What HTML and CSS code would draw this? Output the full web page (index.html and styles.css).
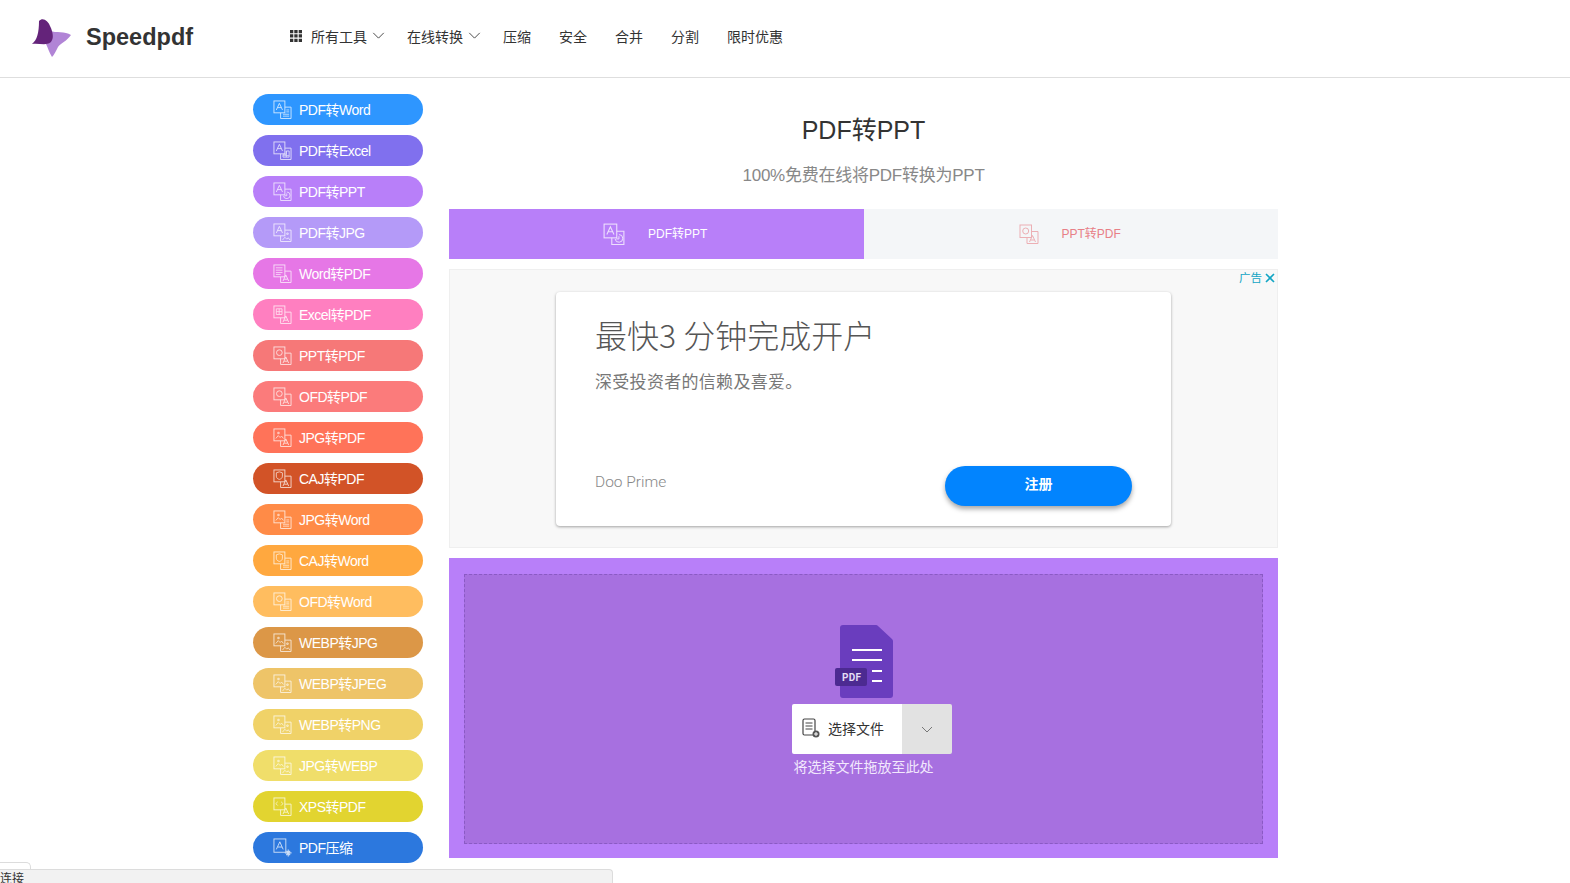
FILE: index.html
```html
<!DOCTYPE html>
<html lang="zh-CN">
<head>
<meta charset="utf-8">
<title>PDF转PPT - Speedpdf</title>
<link rel="stylesheet" href="styles.css">
</head>
<body>
<svg class="defs" width="0" height="0" aria-hidden="true">
  <defs>
    <g id="box" fill="none" stroke="currentColor" stroke-width="1">
      <rect x="1" y="1" width="11.500" height="12.500"/>
      <path d="M12.500 7.500H19V19.500H8V13.500"/>
    </g>
    <path id="sA" d="M3.500 10.500 6.700 3.500l3.300 7M4.800 8h3.900" fill="none" stroke="currentColor"/>
    <path id="sL" d="M3 4h7M3 6.500h7M3 9h7M3 11h5" fill="none" stroke="currentColor" stroke-width=".9"/>
    <path id="sG" d="M3.500 4h6v6h-6zM3.500 7h6M6.500 4v6" fill="none" stroke="currentColor" stroke-width=".9"/>
    <circle id="sC" cx="6.700" cy="7" r="3" fill="none" stroke="currentColor"/>
    <path id="sI" d="M3 11l2.500-3 2 2 1.500-1.500 2 2.500M5 4.500h1.500V6H5z" fill="none" stroke="currentColor" stroke-width=".9"/>
    <path id="sS" d="M3.500 4l3.200-1 3.200 1v3.500c0 2-1.500 3-3.200 3.500-1.700-.5-3.200-1.500-3.200-3.500z" fill="none" stroke="currentColor" stroke-width=".9"/>
    <path id="sX" d="M5 5 3 7l2 2M8.500 5l2 2-2 2" fill="none" stroke="currentColor" stroke-width=".9"/>
    <path id="tA" d="M10.500 18l3-6.500 3 6.500M11.700 16h3.600" fill="none" stroke="currentColor"/>
    <path id="tL" d="M14 10.500h3M14 12.500h3M10.500 15h6.500M10.500 17h6.500" fill="none" stroke="currentColor" stroke-width=".9"/>
    <path id="tG" d="M14 10.500h3v6.500h-6.500v-3H14zM10.500 15.500H17M14 10.500V17" fill="none" stroke="currentColor" stroke-width=".9"/>
    <path id="tC" d="M14.500 10.500a3.500 3.500 0 1 1-3.500 4M14.500 12v2.500H12" fill="none" stroke="currentColor" stroke-width=".9"/>
    <path id="tI" d="M10 18l2.500-3 2 2 1.500-1.500 2 2.500M14.500 10.500H16V12h-1.500z" fill="none" stroke="currentColor" stroke-width=".9"/>
  </defs>
</svg>

<header class="topbar">
  <a class="brand">
    <svg class="logo" viewBox="0 0 40 40" aria-hidden="true">
      <path d="M19 13C25 15 34 13 40 17 36 23 30 25 27 29 25 33 23 37 21 39 18 34 17 30 15 26 20 25 23 19 19 13Z" fill="#b184d6"/>
      <path d="M8 3C12-1 17 3 19 8 22 14 23 20 20 24 16 28 8 25 1 26 6 22 8 15 8 3Z" fill="#64237a"/>
    </svg>
    <span class="brand-name">Speedpdf</span>
  </a>
  <nav class="nav">
    <a class="nav-item nav-tools">
      <svg class="grid-ico" viewBox="0 0 12 12" aria-hidden="true"><path d="M0 0h3.300v3.300H0zM4.300 0h3.300v3.300H4.300zM8.700 0H12v3.300H8.700zM0 4.300h3.300v3.300H0zM4.300 4.300h3.300v3.300H4.300zM8.700 4.300H12v3.300H8.700zM0 8.700h3.300V12H0zM4.300 8.700h3.300V12H4.300zM8.700 8.700H12V12H8.700z" fill="#333"/></svg>
      所有工具
      <svg class="chev" viewBox="0 0 14 8" aria-hidden="true"><path d="M1 1l6 6 6-6" fill="none" stroke="#333" stroke-width="1"/></svg>
    </a>
    <a class="nav-item nav-conv">在线转换
      <svg class="chev" viewBox="0 0 14 8" aria-hidden="true"><path d="M1 1l6 6 6-6" fill="none" stroke="#333" stroke-width="1"/></svg>
    </a>
    <a class="nav-item">压缩</a>
    <a class="nav-item">安全</a>
    <a class="nav-item">合并</a>
    <a class="nav-item">分割</a>
    <a class="nav-item">限时优惠</a>
  </nav>
</header>

<div class="page">
  <aside class="side">
    <a class="pill c1"><svg class="pill-ico" viewBox="0 0 20 20"><use href="#box"/><use href="#sA"/><use href="#tL"/></svg>PDF转Word</a>
    <a class="pill c2"><svg class="pill-ico" viewBox="0 0 20 20"><use href="#box"/><use href="#sA"/><use href="#tG"/></svg>PDF转Excel</a>
    <a class="pill c3"><svg class="pill-ico" viewBox="0 0 20 20"><use href="#box"/><use href="#sA"/><use href="#tC"/></svg>PDF转PPT</a>
    <a class="pill c4"><svg class="pill-ico" viewBox="0 0 20 20"><use href="#box"/><use href="#sA"/><use href="#tI"/></svg>PDF转JPG</a>
    <a class="pill c5"><svg class="pill-ico" viewBox="0 0 20 20"><use href="#box"/><use href="#sL"/><use href="#tA"/></svg>Word转PDF</a>
    <a class="pill c6"><svg class="pill-ico" viewBox="0 0 20 20"><use href="#box"/><use href="#sG"/><use href="#tA"/></svg>Excel转PDF</a>
    <a class="pill c7"><svg class="pill-ico" viewBox="0 0 20 20"><use href="#box"/><use href="#sC"/><use href="#tA"/></svg>PPT转PDF</a>
    <a class="pill c8"><svg class="pill-ico" viewBox="0 0 20 20"><use href="#box"/><use href="#sC"/><use href="#tA"/></svg>OFD转PDF</a>
    <a class="pill c9"><svg class="pill-ico" viewBox="0 0 20 20"><use href="#box"/><use href="#sI"/><use href="#tA"/></svg>JPG转PDF</a>
    <a class="pill c10"><svg class="pill-ico" viewBox="0 0 20 20"><use href="#box"/><use href="#sS"/><use href="#tA"/></svg>CAJ转PDF</a>
    <a class="pill c11"><svg class="pill-ico" viewBox="0 0 20 20"><use href="#box"/><use href="#sI"/><use href="#tL"/></svg>JPG转Word</a>
    <a class="pill c12"><svg class="pill-ico" viewBox="0 0 20 20"><use href="#box"/><use href="#sS"/><use href="#tL"/></svg>CAJ转Word</a>
    <a class="pill c13"><svg class="pill-ico" viewBox="0 0 20 20"><use href="#box"/><use href="#sC"/><use href="#tL"/></svg>OFD转Word</a>
    <a class="pill c14"><svg class="pill-ico" viewBox="0 0 20 20"><use href="#box"/><use href="#sI"/><use href="#tI"/></svg>WEBP转JPG</a>
    <a class="pill c15"><svg class="pill-ico" viewBox="0 0 20 20"><use href="#box"/><use href="#sI"/><use href="#tI"/></svg>WEBP转JPEG</a>
    <a class="pill c16"><svg class="pill-ico" viewBox="0 0 20 20"><use href="#box"/><use href="#sI"/><use href="#tI"/></svg>WEBP转PNG</a>
    <a class="pill c17"><svg class="pill-ico" viewBox="0 0 20 20"><use href="#box"/><use href="#sI"/><use href="#tI"/></svg>JPG转WEBP</a>
    <a class="pill c18"><svg class="pill-ico" viewBox="0 0 20 20"><use href="#box"/><use href="#sX"/><use href="#tA"/></svg>XPS转PDF</a>
    <a class="pill c19"><svg class="pill-ico" viewBox="0 0 20 20"><rect x="1" y="1" width="12.500" height="14" fill="none" stroke="currentColor"/><path d="M3.500 12 7.200 4l3.500 8M5 9.500h4.500" fill="none" stroke="currentColor"/><path d="M16 12v7.500M12.500 15.700h7M14 13.500l4 4.500M18 13.500l-4 4.500" stroke="currentColor" stroke-width="1.200"/></svg>PDF压缩</a>
  </aside>

  <main class="main">
    <h1 class="title">PDF转PPT</h1>
    <p class="subtitle">100%免费在线将PDF转换为PPT</p>

    <div class="tabs">
      <a class="tab tab-on"><svg class="tab-ico" viewBox="0 0 20 20"><use href="#box"/><use href="#sA"/><use href="#tC"/></svg>PDF转PPT</a>
      <a class="tab tab-off"><svg class="tab-ico" viewBox="0 0 20 20"><use href="#box"/><use href="#sC"/><use href="#tA"/></svg>PPT转PDF</a>
    </div>

    <section class="ad">
      <div class="ad-mark">
        <span class="ad-label">广告</span>
        <svg class="ad-x" viewBox="0 0 10 10" aria-hidden="true"><path d="M1 1l8 8M9 1l-8 8" stroke="#12a5c4" stroke-width="1.600"/></svg>
      </div>
      <div class="ad-card">
        <div class="ad-head">最快3 分钟完成开户</div>
        <div class="ad-desc">深受投资者的信赖及喜爱。</div>
        <div class="ad-foot">
          <span class="ad-brand">Doo Prime</span>
          <a class="ad-btn">注册</a>
        </div>
      </div>
    </section>

    <section class="upload">
      <div class="drop">
        <svg class="pdf-ico" viewBox="0 0 58 73" aria-hidden="true">
          <path d="M5 3a3 3 0 0 1 3-3h33a3 3 0 0 1 2 1l14 13a3 3 0 0 1 1 2v54a3 3 0 0 1-3 3H8a3 3 0 0 1-3-3z" fill="#6a3dbe"/>
          <path d="M17 25h30M17 35h30M37 46h10M37 56h10" stroke="#fff" stroke-width="2"/>
          <rect x="0" y="43" width="32" height="18" rx="2" fill="#4c2a91"/>
        </svg>
        <span class="pdf-tag">PDF</span>
        <div class="pick">
          <a class="pick-main">
            <svg class="pick-ico" viewBox="0 0 18 20" aria-hidden="true">
              <rect x="1" y="1" width="12" height="16" rx="1.500" fill="none" stroke="#444" stroke-width="1.200"/>
              <path d="M3.500 5h7M3.500 8h7M3.500 11h7" stroke="#444" stroke-width="1"/>
              <circle cx="14" cy="16" r="3.500" fill="#555"/>
              <path d="M14 14v4M12 16h4" stroke="#fff" stroke-width="1"/>
            </svg>
            选择文件
          </a>
          <a class="pick-more"><svg class="pick-chev" viewBox="0 0 12 7" aria-hidden="true"><path d="M1 1l5 5 5-5" fill="none" stroke="#777" stroke-width="1"/></svg></a>
        </div>
        <div class="hint">将选择文件拖放至此处</div>
      </div>
    </section>
  </main>
</div>

<div class="status">
  <div class="status-tab"></div>
  <div class="status-box">连接</div>
</div>
</body>
</html>
```
FILE: styles.css
```css
* { box-sizing: border-box; }
html, body { margin: 0; height: 883px; overflow: hidden; }
body {
  background: #fff;
  color: #333;
  font-family: "Liberation Sans", "Noto Sans CJK SC", sans-serif;
  position: relative;
}
a { color: inherit; text-decoration: none; }
.defs { position: absolute; }

.topbar {
  height: 78px;
  border-bottom: 1px solid #dedede;
  display: flex;
  align-items: center;
  padding: 0 0 4px 31px;
}
.brand { display: flex; align-items: center; width: 259px; }
.logo { width: 40px; height: 40px; margin-top: 3px; }
.brand-name {
  font-size: 23.5px;
  font-weight: 700;
  color: #333;
  margin-left: 15px;
  margin-top: 1px;
}
.nav { display: flex; align-items: center; font-size: 14px; color: #333; margin-top: -2px; }
.nav-item { display: flex; align-items: center; margin-right: 28px; white-space: nowrap; }
.nav-tools { margin-right: 22px; }
.nav-conv { margin-right: 22px; }
.grid-ico { width: 12px; height: 12px; margin-right: 9px; }
.chev { width: 13px; height: 7px; margin-left: 5px; }

.page { display: flex; padding-left: 253px; }
.side {
  width: 170px;
  padding-top: 16px;
  display: flex;
  flex-direction: column;
  gap: 10px;
  flex: none;
}
.pill {
  height: 31px;
  border-radius: 16px;
  color: #fff;
  font-size: 14px;
  line-height: 29px;
  display: flex;
  align-items: center;
  padding-left: 20px;
  padding-top: 1px;
  white-space: nowrap;
  letter-spacing: -0.5px;
}
.pill-ico { width: 19px; height: 19px; margin-right: 7px; margin-top: -2px; opacity: .75; color: #fff; flex: none; }
.c1 { background: #2e96ff; }
.c2 { background: #8070ee; }
.c3 { background: #b87ff9; }
.c4 { background: #b49af8; }
.c5 { background: #e677e6; }
.c6 { background: #ff7fc0; }
.c7 { background: #f67878; }
.c8 { background: #fb7b7b; }
.c9 { background: #ff7359; }
.c10 { background: #d25327; }
.c11 { background: #ff8b47; }
.c12 { background: #ffa83f; }
.c13 { background: #ffbd5f; }
.c14 { background: #dc9747; }
.c15 { background: #eec468; }
.c16 { background: #f0d268; }
.c17 { background: #f0de6a; }
.c18 { background: #e2d430; }
.c19 { background: #2c78de; }

.main { width: 829px; margin-left: 26px; flex: none; }
.title {
  font-size: 25px;
  font-weight: 400;
  color: #333;
  text-align: center;
  margin: 0;
  padding-top: 38px;
  line-height: 28px;
}
.subtitle {
  font-size: 17px;
  color: #888;
  text-align: center;
  margin: 0;
  padding-top: 20px;
  line-height: 24px;
  height: 65px;
  letter-spacing: -0.25px;
}
.tabs { display: flex; height: 50px; }
.tab {
  flex: 0 0 50%;
  display: flex;
  align-items: center;
  font-size: 12px;
  line-height: 14px;
}
.tab-on { background: #b87ff9; color: #fff; padding-left: 154px; }
.tab-off { background: #f4f6f8; color: #e88087; padding-left: 155px; }
.tab-ico { width: 22px; height: 22px; margin-right: 23px; opacity: .75; }
.tab-off .tab-ico { width: 20px; height: 20px; opacity: .6; }

.ad {
  margin-top: 10px;
  height: 279px;
  background: #f8f8f8;
  border: 1px solid #efefef;
  padding: 22px 106px 0;
  position: relative;
}
.ad-mark { position: absolute; top: 1px; right: 2px; display: flex; align-items: center; gap: 3px; }
.ad-label { font-size: 11.500px; color: #12a5c4; line-height: 14px; }
.ad-x { width: 10px; height: 10px; }
.ad-card {
  height: 234px;
  background: #fff;
  border-radius: 4px;
  box-shadow: 0 1px 3px rgba(0,0,0,.35);
  padding: 20px 39px 0;
  display: flex;
  flex-direction: column;
}
.ad-head {
  font-family: "Noto Sans CJK SC", "Liberation Sans", sans-serif;
  font-size: 32px;
  color: #555;
  line-height: 44px;
  font-weight: 300;
}
.ad-desc {
  font-size: 17px;
  letter-spacing: .3px;
  color: #777;
  margin-top: 15px;
  line-height: 24px;
}
.ad-foot {
  margin-top: 71px;
  display: flex;
  justify-content: space-between;
  align-items: center;
}
.ad-brand { font-family: Roboto, sans-serif; font-weight: 300; font-size: 15.500px; color: #888; padding-bottom: 8px; }
.ad-btn {
  width: 187px;
  height: 40px;
  border-radius: 20px;
  background: #0284fe;
  color: #fff;
  font-size: 14px;
  font-weight: 700;
  padding-bottom: 6px;
  display: flex;
  align-items: center;
  justify-content: center;
  box-shadow: 0 3px 5px rgba(0,0,0,.35);
}

.upload {
  margin-top: 10px;
  height: 300px;
  background: #b87ff9;
  padding: 16px 15px 0;
}
.drop {
  height: 270px;
  background: #a770e0;
  border: 1px dashed #8a5ac4;
  display: flex;
  flex-direction: column;
  align-items: center;
  padding-top: 50px;
  position: relative;
}
.pdf-ico { width: 58px; height: 73px; display: block; margin-left: 1px; flex: none; }
.pdf-tag {
  position: absolute;
  left: 377px;
  top: 97px;
  font-family: Roboto, sans-serif;
  font-size: 10px;
  font-weight: 700;
  color: #e4dcf5;
  letter-spacing: .3px;
}
.pick {
  margin-top: 6px;
  margin-left: 17px;
  display: flex;
  width: 160px;
  height: 50px;
  border-radius: 2px;
  overflow: hidden;
}
.pick-main {
  width: 110px;
  background: #fff;
  color: #333;
  font-size: 14px;
  display: flex;
  align-items: center;
  padding-left: 10px;
  padding-bottom: 2px;
}
.pick-ico { width: 18px; height: 20px; margin-right: 8px; }
.pick-more {
  width: 50px;
  background: #e2e2e2;
  display: flex;
  align-items: center;
  justify-content: center;
}
.pick-chev { width: 12px; height: 7px; }
.hint { color: #f2e8fd; font-size: 14px; line-height: 20px; margin-top: 3px; }

.status { position: absolute; left: 0; top: 862px; width: 613px; height: 21px; }
.status-tab {
  width: 32px;
  height: 8px;
  background: #fff;
  border: 1px solid #dcdcdc;
  border-bottom: 0;
  border-radius: 0 5px 0 0;
  margin-left: -1px;
}
.status-box {
  height: 15px;
  margin-top: -1px;
  background: #f2f2f2;
  border: 1px solid #dcdcdc;
  border-bottom: 0;
  border-left: 0;
  border-radius: 0 4px 0 0;
  font-size: 12px;
  line-height: 19px;
  color: #333;
  overflow: hidden;
}
```
